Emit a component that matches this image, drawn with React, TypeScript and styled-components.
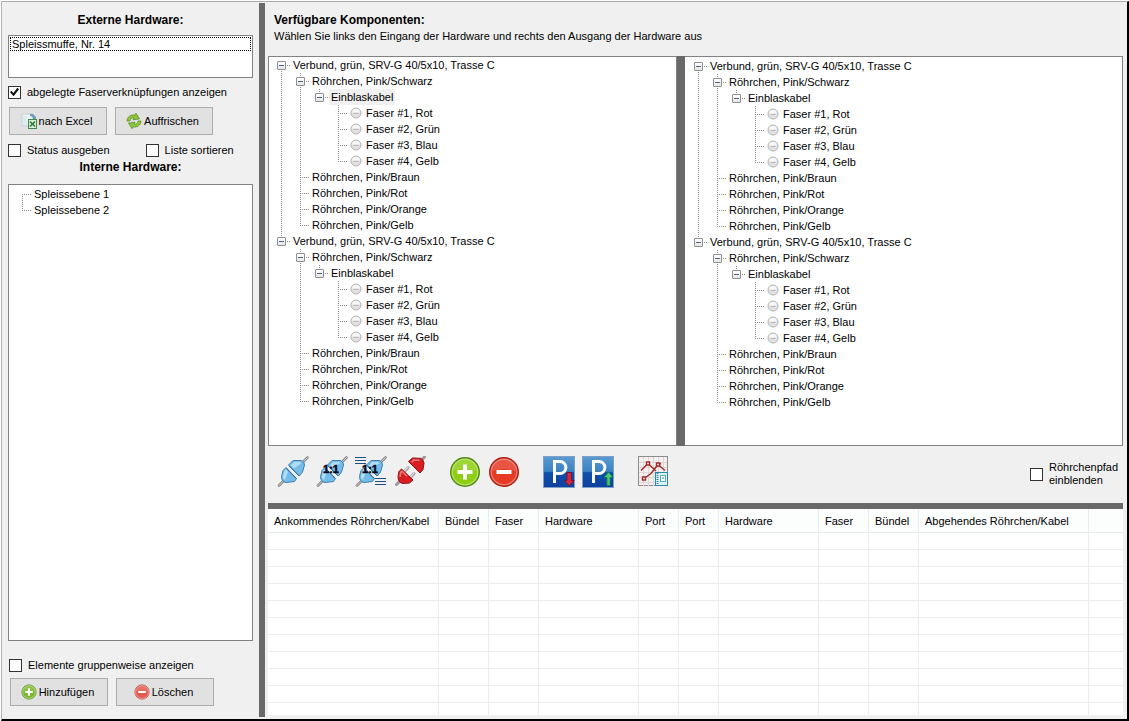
import React, { useState } from "react";
import styled, { createGlobalStyle, css } from "styled-components";

const GlobalStyle = createGlobalStyle`
  *, *::before, *::after { box-sizing: border-box; }
  body {
    margin: 0;
    background: #fff;
    color: #000;
    font-family: "Liberation Sans", Arial, sans-serif;
    font-size: 11px;
    line-height: 16px;
  }
  ul { list-style: none; margin: 0; padding: 0; }
  button, input { font: inherit; color: inherit; margin: 0; }
`;

const Page = styled.div`
  height: 100vh;
  padding: 1px 0 0 1px;
`;

const Window = styled.div`
  display: flex;
  height: 100%;
  min-height: 480px;
  padding: 1px 0 2px;
  background: #f0f0f0;
  border: solid;
  border-width: 1px 2px 2px 1px;
  border-color: #a8aaa9 #000 #000 #b4b4b4;
`;

const Sidebar = styled.aside`
  display: flex;
  flex-direction: column;
  flex: 0 0 257px;
  padding: 9px 6px 11px;
`;

const Splitter = styled.div<{ $vertical?: boolean; $size: number }>`
  flex: 0 0 ${(p) => p.$size}px;
  background: #696969;
  cursor: ${(p) => (p.$vertical ? "col-resize" : "row-resize")};
`;

const Main = styled.main`
  display: flex;
  flex-direction: column;
  flex: 1;
  min-width: 0;
  padding: 9px 4px 2px 3px;
`;

const Heading = styled.h2<{ $centered?: boolean }>`
  margin: 0;
  font-size: 12px;
  font-weight: bold;
  line-height: 16px;
  text-align: ${(p) => (p.$centered ? "center" : "left")};
`;

const Intro = styled.header`
  height: 44px;
  padding-left: 6px;
`;

const Hint = styled.p`
  margin: 0;
`;

const ListBox = styled.ul`
  flex: 0 0 43px;
  margin-top: 7px;
  padding: 1px;
  background: #fff;
  border: 1px solid #828282;
`;

const ListItem = styled.li`
  height: 14px;
  padding-left: 1px;
  line-height: 12px;
  border: 1px dotted #000;
`;

const TreeBox = styled.div<{ $fill?: boolean; $noLeft?: boolean; $offset?: number }>`
  flex: 1;
  min-width: 0;
  min-height: 0;
  overflow: hidden;
  padding: ${(p) => p.$offset ?? 0}px 0 0 ${(p) => (p.$fill ? 4 : 3)}px;
  background: #fff;
  border: 1px solid #828282;
  ${(p) => p.$noLeft && css`border-left: 0;`}
`;

const Fields = styled.div<{ $gap: number }>`
  display: flex;
  gap: ${(p) => p.$gap}px;
`;

const CheckLabel = styled.label<{ $lines?: boolean }>`
  display: flex;
  align-items: center;
  gap: 6px;
  ${(p) => p.$lines && css`
    width: 88px;
    margin-left: auto;
    padding-top: 4px;
    line-height: 13px;
  `}
`;

const CheckInput = styled.input`
  appearance: none;
  display: grid;
  place-items: center;
  flex: 0 0 13px;
  height: 13px;
  background: #fff;
  border: 1px solid #333;
  &:checked::before {
    content: "";
    width: 9px;
    height: 9px;
    background: #111;
    clip-path: polygon(0 52%, 16% 36%, 38% 60%, 82% 4%, 100% 20%, 40% 96%);
  }
`;

const ButtonRow = styled.div`
  display: flex;
  gap: 8px;
  padding-left: 1px;
`;

const PushButton = styled.button`
  display: flex;
  align-items: center;
  justify-content: center;
  gap: 2px;
  width: 98px;
  height: 28px;
  padding: 0 3px 0 0;
  background: #e1e1e1;
  border: 1px solid #adadad;
  &:hover { background: #e5f1fb; border-color: #0078d7; }
`;

const TopGroup = styled.div`
  display: grid;
  gap: 7px;
  padding: 6px 0 1px;
`;

const InternalSection = styled.section`
  display: flex;
  flex-direction: column;
  flex: 1;
  min-height: 0;
  gap: 9px;
`;

const BottomGroup = styled.div`
  display: grid;
  gap: 5px;
  padding: 16px 0 0 1px;
`;

const TreePanes = styled.div`
  display: flex;
  flex: 0 0 390px;
`;

const LeftPane = styled.div`
  display: flex;
  flex: 0 0 409px;
`;

const RightPane = styled.div`
  display: flex;
  flex: 1;
  min-width: 0;
`;

const Toolbar = styled.div`
  display: flex;
  align-items: center;
  flex: 0 0 57px;
  gap: 23px;
  padding: 0 5px 5px 9px;
`;

const ToolGroup = styled.div`
  display: flex;
  gap: 7px;
`;

const ToolButton = styled.button`
  width: 32px;
  height: 32px;
  padding: 0;
  background: none;
  border: 0;
  svg { display: block; }
`;

const dots = (direction: string) =>
  `repeating-linear-gradient(${direction}, #8a8a8a 0 1px, transparent 1px 2px)`;

const TreeNode = styled.li<{ $root: boolean; $first: boolean; $last: boolean }>`
  background-image: ${dots("to bottom")};
  background-repeat: no-repeat;
  background-position: 9px ${(p) => (p.$root && p.$first ? 8 : 0)}px;
  background-size: 1px ${(p) => (p.$last ? "9px" : "100%")};
  & > ul { padding-left: 19px; }
`;

const TreeRow = styled.div`
  display: flex;
  height: 16px;
  white-space: nowrap;
`;

const Branch = styled.span`
  display: grid;
  place-items: center;
  flex: 0 0 19px;
  background: ${dots("to right")} 9px 8px / 10px 1px no-repeat;
`;

const Toggle = styled.button`
  display: grid;
  place-items: center;
  width: 9px;
  height: 9px;
  margin-top: 1px;
  padding: 0;
  background: linear-gradient(#fff, #e6e6e6);
  border: 1px solid #8f8f8f;
  border-radius: 1px;
  svg { display: block; }
`;

const TreeLabel = styled.span<{ $selected?: boolean }>`
  padding: 0 2px;
  background: ${(p) => (p.$selected ? "#f0f0f0" : "none")};
`;

const FiberIcon = styled.span`
  display: grid;
  place-items: center;
  width: 16px;
  height: 16px;
`;

const GridArea = styled.div`
  flex: 1;
  min-height: 0;
  overflow: hidden;
  background: #fff;
`;

const GridTable = styled.table`
  width: 100%;
  table-layout: fixed;
  border-collapse: separate;
  border-spacing: 0;
`;

const HeadCell = styled.th`
  height: 24px;
  padding: 0 0 0 6px;
  font-weight: normal;
  text-align: left;
  white-space: nowrap;
  background: #fcfdfd;
  border-bottom: 1px solid #e6ecee;
  border-right: 1px solid #e8eeee;
  &:last-child { border-right: 0; }
`;

const Cell = styled.td`
  height: 17px;
  padding: 0;
  border-bottom: 1px solid #ececec;
  border-right: 1px solid #ececec;
  &:last-child { border-right: 0; }
`;

type Item = { label: string; fiber?: boolean; selected?: boolean; children?: Item[] };

const bundle = (selected: boolean): Item => ({
  label: "Verbund, grün, SRV-G 40/5x10, Trasse C",
  children: [
    {
      label: "Röhrchen, Pink/Schwarz",
      children: [
        {
          label: "Einblaskabel",
          selected,
          children: ["Rot", "Grün", "Blau", "Gelb"].map((c, i) => ({
            label: `Faser #${i + 1}, ${c}`,
            fiber: true,
          })),
        },
      ],
    },
    { label: "Röhrchen, Pink/Braun" },
    { label: "Röhrchen, Pink/Rot" },
    { label: "Röhrchen, Pink/Orange" },
    { label: "Röhrchen, Pink/Gelb" },
  ],
});

const inputTree = [bundle(true), bundle(false)];
const outputTree = [bundle(false), bundle(false)];
const internalTree: Item[] = [{ label: "Spleissebene 1" }, { label: "Spleissebene 2" }];

const columns = [
  { label: "Ankommendes Röhrchen/Kabel", width: 171 },
  { label: "Bündel", width: 50 },
  { label: "Faser", width: 50 },
  { label: "Hardware", width: 100 },
  { label: "Port", width: 40 },
  { label: "Port", width: 40 },
  { label: "Hardware", width: 100 },
  { label: "Faser", width: 50 },
  { label: "Bündel", width: 50 },
  { label: "Abgehendes Röhrchen/Kabel", width: 170 },
  { label: "" },
];

function Node({ item, root, first, last }: { item: Item; root: boolean; first: boolean; last: boolean }) {
  const [open, setOpen] = useState(true);
  return (
    <TreeNode role="treeitem" aria-expanded={item.children ? open : undefined} $root={root} $first={first} $last={last}>
      <TreeRow>
        <Branch>
          {item.children && (
            <Toggle type="button" aria-label={open ? "Zuklappen" : "Aufklappen"} onClick={() => setOpen(!open)}>
              <svg width="7" height="7" viewBox="0 0 7 7" shapeRendering="crispEdges">
                <path d={open ? "M1 3h5v1H1z" : "M1 3h5v1H1zM3 1h1v5H3z"} fill="#4d5f85" />
              </svg>
            </Toggle>
          )}
        </Branch>
        {item.fiber && (
          <FiberIcon>
            <svg width="12" height="12" viewBox="0 0 12 12">
              <circle cx="6" cy="6" r="5" fill="#e2e2e2" stroke="#b5b5b5" />
              <path d="M2 5.500a4 3.600 0 0 1 8 0z" fill="#f7f7f7" />
              <path d="M3.500 6.500h5" stroke="#b9b9b9" />
            </svg>
          </FiberIcon>
        )}
        <TreeLabel $selected={item.selected}>{item.label}</TreeLabel>
      </TreeRow>
      {item.children && open && (
        <ul role="group">
          {item.children.map((c, i) => (
            <Node key={i} item={c} root={false} first={i === 0} last={i === item.children!.length - 1} />
          ))}
        </ul>
      )}
    </TreeNode>
  );
}

function Tree({ items, label }: { items: Item[]; label: string }) {
  return (
    <ul role="tree" aria-label={label}>
      {items.map((it, i) => (
        <Node key={i} item={it} root first={i === 0} last={i === items.length - 1} />
      ))}
    </ul>
  );
}

function Check({ children, checked, lines }: { children: React.ReactNode; checked?: boolean; lines?: boolean }) {
  return (
    <CheckLabel $lines={lines}>
      <CheckInput type="checkbox" defaultChecked={checked} />
      <span>{children}</span>
    </CheckLabel>
  );
}

const ExcelIcon = () => (
  <svg width="16" height="16" viewBox="0 0 16 16">
    <path d="M1 1h9l3 3v9H1z" fill="#eef3f6" stroke="#c3d0d6" />
    <path d="M2 3h4v9H2z" fill="#dcebf0" />
    <path d="M9 1q4-1 5 3l1-1v4h-4l1-2q-1-2-3-2z" fill="#6d9cb8" />
    <rect x="7.500" y="6.500" width="8" height="9" fill="#dcefd8" stroke="#3f8a4b" />
    <path d="M9 8.500l5 5M14 8.500l-5 5" stroke="#2f7d3d" strokeWidth="1.700" />
  </svg>
);

const RefreshIcon = () => (
  <svg width="16" height="16" viewBox="0 0 16 16">
    <g fill="#8cc63c" stroke="#5b8f1f" strokeWidth=".8" strokeLinejoin="round">
      <path d="M1 8C1 4 5 1 9 2.200l1-1.900 3.500 5.600-6.500.9 1-1.900C6 4.300 4.300 5.500 4 8z" />
      <path d="M15 8c0 4-4 7-8 5.800l-1 1.900-3.500-5.600 6.500-.9-1 1.900c2 .6 3.700-.6 4-3.100z" />
    </g>
  </svg>
);

const RoundIcon = ({ size, kind, soft }: { size: number; kind: "plus" | "minus"; soft?: boolean }) => {
  const plus = kind === "plus";
  const fill = plus ? (soft ? "#7db82e" : "#8fce12") : soft ? "#e2594d" : "#e63a25";
  const edge = plus ? "#4e8a14" : soft ? "#b8463c" : "#a91f14";
  const d = plus ? "M14 8.500h4V14h5.500v4H18v5.500h-4V18H8.500v-4H14z" : "M8.500 14h15v4h-15z";
  return (
    <svg width={size} height={size} viewBox="0 0 32 32">
      <circle cx="16" cy="16" r="14.300" fill={fill} stroke={edge} strokeWidth="1.400" />
      <circle cx="16" cy="16" r="12.800" fill="none" stroke="#fff" strokeOpacity={soft ? 0.6 : 0.35} strokeWidth="1.300" />
      <path d="M4 15a12 12 0 0 1 24 0q-12-4-24 0z" fill="#fff" fillOpacity=".14" />
      <path d={d} fill="#fff" />
    </svg>
  );
};

const PlugBodies = () => (
  <g strokeLinejoin="round">
    <path d="M2 29.500l5-5M25.500 6.500l5-5" stroke="#8b8b8b" strokeWidth="2.600" strokeLinecap="round" />
    <path d="M2 29.500l5-5M25.500 6.500l5-5" stroke="#d0d0d0" strokeWidth="1" strokeLinecap="round" />
    <path d="M9 11.500L19.500 22.500 17.500 25.500 9 26.500Q6.500 26.500 5 23.500L4.500 20.500 6 14.500z" fill="#74bdeb" stroke="#3d7fae" />
    <path d="M11.500 9L22.300 20 25.500 16 27.500 9Q27.500 6 24.500 4.500L16 4.500z" fill="#74bdeb" stroke="#3d7fae" />
    <path d="M6 22q-.5-1 1.500-7.500l1.500-1 2 2.200L8 24zM14 9.500L17 6l6-.300 1 1.800-7 5z" fill="#bfe4f9" fillOpacity=".8" />
    <path d="M9.500 12.500l9.500 10M12 9.800l10 10" stroke="#2c638c" strokeWidth=".9" />
  </g>
);

const PlugIcon = ({ ratio, lines }: { ratio?: boolean; lines?: boolean }) => (
  <svg width="32" height="32" viewBox="0 0 32 32">
    <PlugBodies />
    {ratio && (
      <text x="15" y="17" textAnchor="middle" fontFamily="Liberation Sans, Arial, sans-serif" fontWeight="bold" fontSize="11" fill="#08081a" stroke="#08081a" strokeWidth=".5">
        1:1
      </text>
    )}
    {lines && (
      <g shapeRendering="crispEdges" fill="#1d4f86">
        <path d="M0 1h11v1H0zM0 4h11v1H0zM0 7h11v1H0zM20 22h11v1H20zM20 25h11v1H20zM20 28h11v1H20z" />
      </g>
    )}
  </svg>
);

const UnplugIcon = () => (
  <svg width="32" height="32" viewBox="0 0 32 32">
    <path d="M2.500 28.500l4-4M27 4.500l3.500-3.500" stroke="#999" strokeWidth="3" strokeLinecap="round" />
    <path d="M10 16l4-4.500M16 22l4-4.500" stroke="#9a9a9a" strokeWidth="3" strokeLinecap="round" />
    <path d="M10 15.500l4-4.500M16 21.500l4-4.500" stroke="#e2e2e2" strokeWidth="1.200" strokeLinecap="round" />
    <g fill="#d81e20" stroke="#8f1013" strokeLinejoin="round">
      <path d="M7.500 13L19 24 15.500 27 8.500 27.500Q5.500 27 4.500 24L4 20.500 5 15.500z" />
      <path d="M14.500 5.500L26 17 29 13.500 30 7Q29.500 3.500 26.500 2.300L18.500 2z" />
    </g>
    <path d="M6 21l.700-4.500 1.300-1.200 5 5M18 6.500L19.500 4l6 .300" stroke="#f4797a" strokeWidth="1.600" fill="none" />
  </svg>
);

const ParkIcon = ({ up }: { up?: boolean }) => (
  <svg width="32" height="32" viewBox="0 0 32 32">
    <defs>
      <linearGradient id="park" x1="0" y1="0" x2="0" y2="1">
        <stop offset="0" stopColor="#5a9bd0" />
        <stop offset=".48" stopColor="#3a82c4" />
        <stop offset=".52" stopColor="#0d50a8" />
        <stop offset="1" stopColor="#1040a0" />
      </linearGradient>
    </defs>
    <rect x=".5" y=".5" width="31" height="31" fill="url(#park)" stroke="#7f9fc8" />
    <path d="M11.500 27V5.500h5.500a5.900 6 0 0 1 0 12h-5.500" fill="none" stroke="#fff" strokeWidth="3" />
    {up ? (
      <path d="M26.500 16l4.600 5.500h-3V29.500h-3.200v-8h-3z" fill="#4fc878" stroke="#0d7a50" strokeWidth=".9" />
    ) : (
      <path d="M24 16.500h4.500v8h2.600l-4.800 5.500-4.800-5.500H24z" fill="#d02a42" stroke="#7e0f2c" strokeWidth=".9" />
    )}
  </svg>
);

const ChartIcon = () => (
  <svg width="32" height="32" viewBox="0 0 32 32">
    <rect x="1.500" y=".5" width="29" height="29" fill="#f3f0f0" stroke="#8d8d8d" />
    <path d="M6.500 1v29M11.500 1v29M16.500 1v29M21.500 1v29M26.500 1v29M2 6.500h28M2 11.500h28M2 16.500h28M2 21.500h28M2 26.500h28" stroke="#e3d3d3" />
    <g fill="none" stroke="#a22a26" strokeWidth="1.400">
      <path d="M4 14.500l7-7 8 7.500M7 22.500l7-5 7-9 7 6M21 8.500l3-1" />
      <g fill="#fff">
        <path d="M9.500 6h3v3h-3zM19.500 7h3v3h-3zM5.500 21h3v3h-3z" />
      </g>
    </g>
    <rect x="18.500" y="16.500" width="12" height="13" fill="#dff2f8" stroke="#2a89a6" />
    <path d="M20.500 17v12" stroke="#2a89a6" strokeWidth="2" strokeDasharray="1 1" />
    <rect x="23.500" y="19.500" width="5" height="6" fill="#fff" stroke="#57aac2" />
    <path d="M25 22h2" stroke="#2a89a6" />
  </svg>
);

export default function App() {
  return (
    <Page>
      <GlobalStyle />
      <Window>
        <Sidebar>
          <Heading $centered>Externe Hardware:</Heading>
          <ListBox role="listbox" aria-label="Externe Hardware">
            <ListItem role="option" aria-selected="true">Spleissmuffe, Nr. 14</ListItem>
          </ListBox>
          <TopGroup>
            <Check checked>abgelegte Faserverknüpfungen anzeigen</Check>
            <ButtonRow>
              <PushButton type="button"><ExcelIcon />nach Excel</PushButton>
              <PushButton type="button"><RefreshIcon />Auffrischen</PushButton>
            </ButtonRow>
            <Fields $gap={36}>
              <Check>Status ausgeben</Check>
              <Check>Liste sortieren</Check>
            </Fields>
          </TopGroup>
          <InternalSection>
            <Heading $centered>Interne Hardware:</Heading>
            <TreeBox $fill $offset={1}>
              <Tree items={internalTree} label="Interne Hardware" />
            </TreeBox>
          </InternalSection>
          <BottomGroup>
            <Check>Elemente gruppenweise anzeigen</Check>
            <ButtonRow>
              <PushButton type="button"><RoundIcon size={16} kind="plus" soft />Hinzufügen</PushButton>
              <PushButton type="button"><RoundIcon size={16} kind="minus" soft />Löschen</PushButton>
            </ButtonRow>
          </BottomGroup>
        </Sidebar>
        <Splitter role="separator" $vertical $size={6} />
        <Main>
          <Intro>
            <Heading>Verfügbare Komponenten:</Heading>
            <Hint>Wählen Sie links den Eingang der Hardware und rechts den Ausgang der Hardware aus</Hint>
          </Intro>
          <TreePanes>
            <LeftPane>
              <TreeBox>
                <Tree items={inputTree} label="Eingang" />
              </TreeBox>
            </LeftPane>
            <Splitter role="separator" $vertical $size={8} />
            <RightPane>
              <TreeBox $fill $noLeft $offset={1}>
                <Tree items={outputTree} label="Ausgang" />
              </TreeBox>
            </RightPane>
          </TreePanes>
          <Toolbar>
            <ToolGroup>
              <ToolButton type="button" aria-label="Verbinden"><PlugIcon /></ToolButton>
              <ToolButton type="button" aria-label="Eins zu eins verbinden"><PlugIcon ratio /></ToolButton>
              <ToolButton type="button" aria-label="Mehrere verbinden"><PlugIcon ratio lines /></ToolButton>
              <ToolButton type="button" aria-label="Trennen"><UnplugIcon /></ToolButton>
            </ToolGroup>
            <ToolGroup>
              <ToolButton type="button" aria-label="Hinzufügen"><RoundIcon size={32} kind="plus" /></ToolButton>
              <ToolButton type="button" aria-label="Entfernen"><RoundIcon size={32} kind="minus" /></ToolButton>
            </ToolGroup>
            <ToolGroup>
              <ToolButton type="button" aria-label="Ablegen"><ParkIcon /></ToolButton>
              <ToolButton type="button" aria-label="Holen"><ParkIcon up /></ToolButton>
            </ToolGroup>
            <ToolGroup>
              <ToolButton type="button" aria-label="Diagramm"><ChartIcon /></ToolButton>
            </ToolGroup>
            <Check lines>Röhrchenpfad einblenden</Check>
          </Toolbar>
          <Splitter role="separator" $size={6} />
          <GridArea>
            <GridTable>
              <colgroup>
                {columns.map((c, i) => <col key={i} width={c.width} />)}
              </colgroup>
              <thead>
                <tr>{columns.map((c, i) => <HeadCell key={i} scope="col">{c.label}</HeadCell>)}</tr>
              </thead>
              <tbody>
                {Array.from({ length: 40 }, (_, r) => (
                  <tr key={r}>{columns.map((_, i) => <Cell key={i} />)}</tr>
                ))}
              </tbody>
            </GridTable>
          </GridArea>
        </Main>
      </Window>
    </Page>
  );
}
